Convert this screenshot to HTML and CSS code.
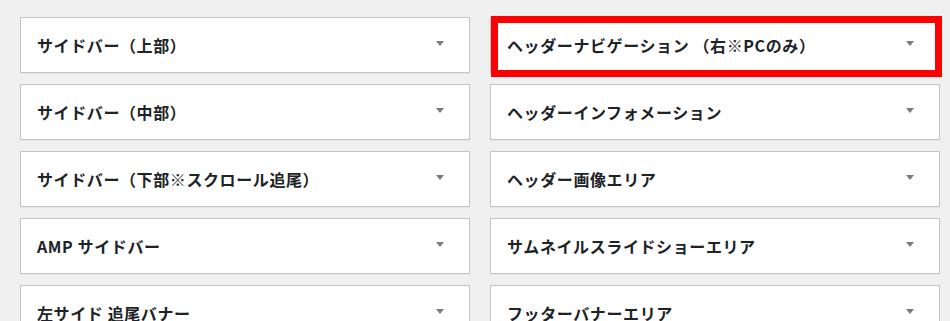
FILE: index.html
```html
<!DOCTYPE html>
<html lang="ja">
  <head>
    <meta charset="utf-8" />
    <title>ウィジェット</title>
    <link rel="stylesheet" href="styles.css">
  </head>
<body>

<div class="areas">
  <div class="area"><h2>サイドバー（上部）</h2><span class="toggle"></span></div>
  <div class="area"><h2>ヘッダーナビゲーション （右※PCのみ）</h2><span class="toggle"></span><span class="mark"></span></div>

  <div class="area"><h2>サイドバー（中部）</h2><span class="toggle"></span></div>
  <div class="area"><h2>ヘッダーインフォメーション</h2><span class="toggle"></span></div>

  <div class="area"><h2>サイドバー（下部※スクロール追尾）</h2><span class="toggle"></span></div>
  <div class="area"><h2>ヘッダー画像エリア</h2><span class="toggle"></span></div>

  <div class="area"><h2>AMP サイドバー</h2><span class="toggle"></span></div>
  <div class="area"><h2>サムネイルスライドショーエリア</h2><span class="toggle"></span></div>

  <div class="area"><h2>左サイド 追尾バナー</h2><span class="toggle"></span></div>
  <div class="area"><h2>フッターバナーエリア</h2><span class="toggle"></span></div>
</div>

</body>
</html>
```

FILE: styles.css
```css
body {
    margin: 0;
    background: #f0f0f1;
    font-family: "Noto Sans CJK JP", "Noto Sans", sans-serif;
    color: #1d2327;
}
.areas {
    display: grid;
    grid-template-columns: 450px 450px;
    column-gap: 20px;
    row-gap: 11px;
    padding: 17px 0 0 20px;
}
.area {
    position: relative;
    display: flex;
    align-items: center;
    height: 56px;
    box-sizing: border-box;
    border: 1px solid #c3c4c7;
    background: #fff;
    box-shadow: 0 1px 1px rgba(0, 0, 0, 0.04);
    padding: 0 25px 0 16px;
}
.area h2 {
    flex: 1;
    margin: 0;
    font-size: 16px;
    font-weight: bold;
    letter-spacing: 0.6px;
    line-height: 1;
    white-space: nowrap;
}
.toggle {
    width: 0;
    height: 0;
    margin-top: -4px;
    border-left: 4px solid transparent;
    border-right: 4px solid transparent;
    border-top: 5px solid #787c82;
}
.mark {
    position: absolute;
    left: 0;
    top: -2px;
    width: 451px;
    height: 61px;
    box-sizing: border-box;
    border: 7px solid #ff0000;
}
```
